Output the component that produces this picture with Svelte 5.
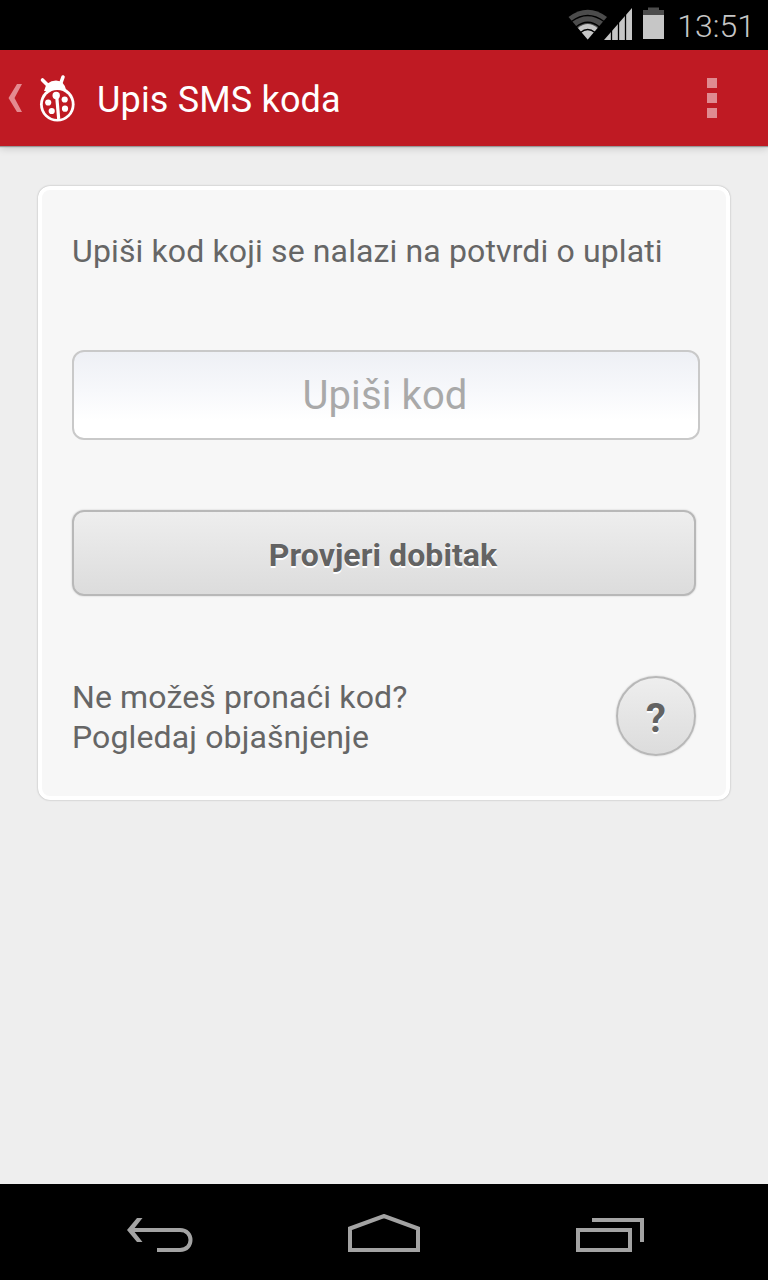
<script lang="ts">
  let code = $state('');
</script>

<div class="screen">
  <div class="status-bar">
    <svg class="status-icons" width="98" height="40" viewBox="568 4 98 40">
      <path d="M587.700 39.500L568.500 17Q587.700 2.500 607 17Z" fill="#4c4c4c" />
      <path d="M587.700 39.500L578 28Q587.700 20 597.500 28Z" fill="#c6c6c6" />
      <path
        d="M571.500 21.500Q587.700 9.500 604 21.500 M576 27Q587.700 17.500 599.500 27 M580.500 32.500Q587.700 26.500 595 32.500"
        fill="none"
        stroke="#000"
        stroke-width="1.300"
      />
      <path d="M604 40L632 8V40Z" fill="#c6c6c6" />
      <path d="M611.500 28V40 M618.500 20V40 M625.500 12V40" stroke="#000" stroke-width="1.300" />
      <path d="M643 15V10H648V7.500H659V10H664V15Z" fill="#4c4c4c" />
      <path d="M643 15H664V39H643Z" fill="#c6c6c6" />
    </svg>
    <span class="clock">13:51</span>
  </div>

  <header class="action-bar">
    <svg width="78" height="60" viewBox="0 68 78 60">
      <path d="M17 84H22L14.500 98L22 112H17L8.500 98Z" fill="#e48a90" />
      <path
        d="M42.500 80L48.500 86 M63 77L60.500 84"
        stroke="#fff"
        stroke-width="3.600"
        stroke-linecap="round"
      />
      <path d="M44 91Q46 80.500 56 80.500Q64.500 80.500 66.500 91Z" fill="#fff" />
      <circle cx="57.300" cy="104.300" r="17.300" fill="#fff" />
      <circle cx="57.300" cy="104.500" r="14.500" fill="#bf1a23" />
      <path d="M56.500 94L58.700 119" stroke="#fff" stroke-width="3.200" />
      <g fill="#fff">
        <circle cx="56.200" cy="95.500" r="3.700" />
        <circle cx="48.200" cy="102.500" r="3.100" />
        <circle cx="64.700" cy="99.500" r="3.100" />
        <circle cx="51.700" cy="111" r="3.100" />
        <circle cx="65" cy="108.700" r="3.100" />
      </g>
    </svg>
    <h1>Upis SMS koda</h1>
    <div class="overflow">
      <i></i>
      <i></i>
      <i></i>
    </div>
  </header>

  <main>
    <section class="card">
      <p class="intro">Upiši kod koji se nalazi na potvrdi o uplati</p>
      <input class="code-input" type="text" placeholder="Upiši kod" bind:value={code} />
      <button class="check-button" type="button">Provjeri dobitak</button>
      <div class="help">
        <p>Ne možeš pronaći kod?<br />Pogledaj objašnjenje</p>
        <button class="help-button" type="button">?</button>
      </div>
    </section>
  </main>

  <nav class="nav-bar">
    <svg width="68" height="40" viewBox="126 1214 68 40">
      <path d="M129 1230H180C194 1230 194 1250 180 1250H157" />
      <path d="M137 1218H142.500L133 1230L142.500 1242H137L127 1230Z" class="solid" />
    </svg>
    <svg width="72" height="40" viewBox="348 1214 72 40">
      <path d="M350 1228.500L384 1216L418 1228.500V1250H350Z" />
    </svg>
    <svg width="68" height="40" viewBox="576 1214 68 40">
      <path d="M578 1230H630V1250H578Z M592 1220H642V1242" />
    </svg>
  </nav>
</div>

<style>
  :global(body) {
    margin: 0;
  }

  .screen {
    display: flex;
    flex-direction: column;
    width: 768px;
    height: 1280px;
    overflow: hidden;
    background: #eee;
    color: #666;
    font-family: Roboto, "Noto Sans", sans-serif;
  }

  svg {
    display: block;
    flex-shrink: 0;
  }

  .status-bar {
    display: flex;
    align-items: center;
    justify-content: flex-end;
    flex-shrink: 0;
    height: 50px;
    box-sizing: border-box;
    padding-right: 13px;
    background: #000;
  }

  .status-icons {
    margin: 0 11px 2px 0;
  }

  .clock {
    padding-top: 1px;
    color: #c6c6c6;
    font-size: 32px;
    font-weight: 300;
    line-height: 50px;
  }

  .action-bar {
    display: flex;
    align-items: center;
    flex-shrink: 0;
    height: 96px;
    background: #bf1a23;
    box-shadow: 0 1px 1px #999, 0 2px 8px rgb(0 0 0 / 0.18);
  }

  h1 {
    margin: 4px 0 0 19px;
    color: #fff;
    font-size: 36px;
    font-weight: 400;
    letter-spacing: 0.17px;
    line-height: 44px;
  }

  .overflow {
    display: flex;
    flex-direction: column;
    gap: 5px;
    margin: 0 51px 0 auto;
  }

  .overflow i {
    width: 10px;
    height: 10px;
    background: #df8b91;
  }

  main {
    flex: 1;
    padding: 40px 38px;
  }

  .card {
    box-sizing: border-box;
    height: 614px;
    padding: 40px 30px 0;
    border: 4px solid #fff;
    border-radius: 12px;
    background: #f7f7f7;
    box-shadow: 0 0 2px rgb(0 0 0 / 0.3);
  }

  p {
    margin: 0;
    font-size: 32px;
    letter-spacing: 0.13px;
    line-height: 40px;
    white-space: nowrap;
  }

  .intro {
    padding-top: 1px;
  }

  .code-input {
    display: block;
    box-sizing: border-box;
    width: 628px;
    height: 90px;
    margin-top: 79px;
    padding: 1px 2px 0 0;
    border: 2px solid #c9c9c9;
    border-radius: 12px;
    background: linear-gradient(#eef0f5, #f7f8fb 45%, #fff 80%);
    color: #666;
    font-family: inherit;
    font-size: 40px;
    letter-spacing: 0.1px;
    text-align: center;
    outline: none;
  }

  .code-input::placeholder {
    color: #a9a9a9;
    opacity: 1;
  }

  .check-button,
  .help-button {
    display: block;
    box-sizing: border-box;
    padding: 0;
    border: 2px solid #b8b8b8;
    background: linear-gradient(#eee, #dcdcdc);
    box-shadow: 0 0 2px rgb(0 0 0 / 0.2);
    color: #636363;
    font-family: inherit;
    font-weight: 700;
    text-shadow: 0 2px 0 #fff;
  }

  .check-button {
    width: 624px;
    height: 86px;
    margin-top: 70px;
    padding: 3px 2px 0 0;
    border-radius: 12px;
    font-size: 32px;
    letter-spacing: 0.08px;
  }

  .help {
    display: flex;
    align-items: flex-start;
    justify-content: space-between;
    margin-top: 80px;
  }

  .help p {
    padding-top: 1px;
  }

  .help-button {
    width: 80px;
    height: 80px;
    padding-top: 4px;
    border-radius: 50%;
    font-size: 40px;
  }

  .nav-bar {
    display: flex;
    align-items: center;
    justify-content: space-between;
    flex-shrink: 0;
    height: 96px;
    box-sizing: border-box;
    padding: 4px 124px 0 126px;
    background: #000;
  }

  .nav-bar svg:nth-child(2) {
    margin-right: 2px;
  }

  .nav-bar path {
    fill: none;
    stroke: #a3a3a3;
    stroke-width: 4;
  }

  .nav-bar .solid {
    fill: #a3a3a3;
    stroke: none;
  }
</style>
